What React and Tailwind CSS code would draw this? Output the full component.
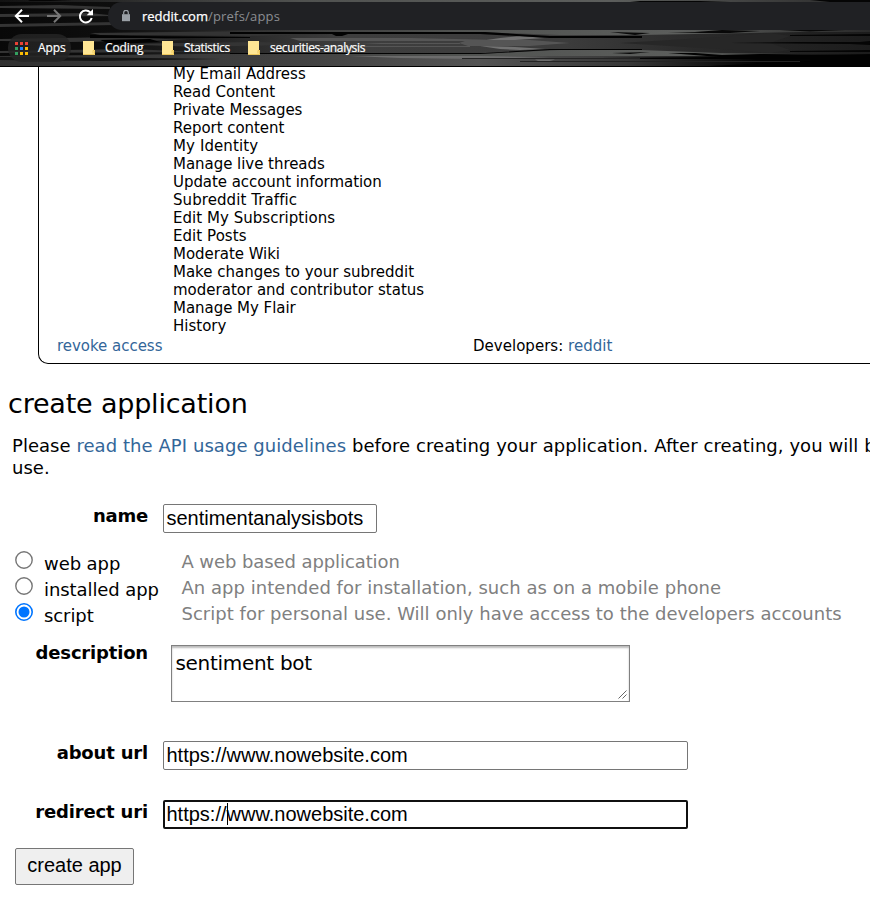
const permissions = [
  ['My Email Address', 'tracking-[0px]'],
  ['Read Content', 'tracking-[0px]'],
  ['Private Messages', 'tracking-[-0.08px]'],
  ['Report content', 'tracking-[-0.04px]'],
  ['My Identity', 'tracking-[0.1px]'],
  ['Manage live threads', 'tracking-[-0.04px]'],
  ['Update account information', 'tracking-[-0.06px]'],
  ['Subreddit Traffic', 'tracking-[0.08px]'],
  ['Edit My Subscriptions', 'tracking-[0.03px]'],
  ['Edit Posts', 'tracking-[0.05px]'],
  ['Moderate Wiki', 'tracking-[-0.05px]'],
  ['Make changes to your subreddit', 'tracking-[-0.01px]'],
  ['moderator and contributor status', 'tracking-[0px]'],
  ['Manage My Flair', 'tracking-[-0.04px]'],
  ['History', 'tracking-[0px]'],
];

const appTypes = [
  { name: 'web app', hint: 'A web based application', tracking: 'tracking-[-0.09px]' },
  { name: 'installed app', hint: 'An app intended for installation, such as on a mobile phone', tracking: 'tracking-[0.03px]' },
  { name: 'script', hint: 'Script for personal use. Will only have access to the developers accounts', tracking: 'tracking-[0.02px]', checked: true },
];

function Streaks() {
  return (
    <svg className="absolute inset-0" width="870" height="67" viewBox="0 0 870 67">
      <defs>
        <linearGradient id="base" x1="0" x2="1" y1="0" y2="0">
          <stop offset="0" stopColor="#080808" />
          <stop offset="0.13" stopColor="#0e0e0e" />
          <stop offset="0.24" stopColor="#222" />
          <stop offset="0.4" stopColor="#3e3e3e" />
          <stop offset="0.65" stopColor="#3c3c3c" />
          <stop offset="0.8" stopColor="#2a2a2a" />
          <stop offset="1" stopColor="#1c1c1c" />
        </linearGradient>
        <linearGradient id="shine" x1="0" x2="1" y1="0" y2="0">
          <stop offset="0" stopColor="#3a3a3a" stopOpacity="0.2" />
          <stop offset="0.35" stopColor="#505250" />
          <stop offset="0.7" stopColor="#5c5e5c" />
          <stop offset="1" stopColor="#2a2a2a" />
        </linearGradient>
        <linearGradient id="lower" x1="0" x2="1" y1="0" y2="0">
          <stop offset="0" stopColor="#303030" />
          <stop offset="0.35" stopColor="#424242" />
          <stop offset="0.55" stopColor="#545454" />
          <stop offset="0.72" stopColor="#383838" />
          <stop offset="0.87" stopColor="#030303" />
        </linearGradient>
      </defs>
      <rect width="870" height="67" fill="url(#base)" />
      <rect width="870" height="2" fill="url(#shine)" />
      <path d="M30 0h42l-22 1H28zM630 1h70l30 1H640zM810 0h60v2H830z" fill="#050505" />
      <g fill="#343434">
        <path d="M0 6 60 5 110 7 110 9 0 8zM0 14 90 13 118 16 0 17zM0 24 118 22 116 25 0 27z" />
        <path d="M90 33 260 31 330 34 250 36 100 35zM0 39 120 37 190 40 70 42 0 41zM110 44 260 42 320 44 200 47zM0 51 130 49 200 52 0 53z" />
      </g>
      <path d="M100 40 150 39 160 42 110 44zM90 35 130 36 250 37V38H90z" fill="#020202" />
      <path d="M0 56 200 54H870V66H0z" fill="url(#lower)" />
      <path d="M0 57 150 58 220 59 100 61 0 60z" fill="#151515" />
      <path d="M230 30H870V32H800L640 35 560 35 480 32H230z" fill="url(#shine)" />
      <path d="M230 54H480L560 50H640L720 53 870 55V56H230z" fill="url(#shine)" />
      <path d="M290 38H410L500 40V41H300zM320 46H470V47H320zM360 43H460V44H380z" fill="#565656" />
      <path d="M480 41 500 38 520 36 545 38 515 40zM480 46 515 47 545 49 520 50 500 49z" fill="#727272" />
      <path d="M459 43 468 40 530 40 570 43 530 46 468 46z" fill="#555" />
      <path d="M230 32H485L550 36H642V38H550L480 34H230zM230 53H485L550 49H642V50H550L480 54H230zM332 34h16l-6 2h-6z" fill="#020202" />
      <path d="M610 32 650 33 635 35zM668 32 695 32 722 30 760 31 730 33 700 33zM780 30 845 30 810 31.5zM612 53 650 52 630 54z" fill="#080808" />
      <path d="M668 53 695 53 722 55 760 54 870 55V66H710L810 61V59H600V58L720 57z" fill="#020202" />
      <path d="M620 43 720 37 770 33 790 36 770 43 790 50 770 53 720 49z" fill="#272727" />
      <path d="M730 43 800 42 860 42 870 41V45L850 44 730 43zM790 35 870 34V36L790 36zM790 51 870 50V52L790 52z" fill="#050505" />
      <path d="M350 56 480 56 550 57 480 59 400 58zM535 59.500h20l-5 1.500h-12z" fill="#6c6c6c" />
      <path d="M462 58H640V59H462zM520 61H800V62H520z" fill="#242424" />
      <path d="M0 66H870V67H0z" fill="#000" />
    </svg>
  );
}

function Folder() {
  return (
    <svg width="12" height="14" viewBox="0 0 12 14" className="shrink-0">
      <path d="M0 0h11v9h1v5H0z" fill="#ffe694" />
      <path d="M0 13.500h11.500V9.500h-1.500v3" fill="none" stroke="#eec75a" />
    </svg>
  );
}

function BrowserChrome() {
  return (
    <header className="relative h-[67px] w-full overflow-hidden bg-black">
      <Streaks />
      <div className="relative flex h-8 items-center">
        <svg width="108" height="32" viewBox="0 0 108 32" fill="none" strokeWidth="2" className="shrink-0">
          <path d="M29 16H16.500M22 9.700 15.800 16l6.200 6.300" stroke="#fff" />
          <path d="M47 16h12.500M54 9.700 60.200 16 54 22.300" stroke="#777" />
          <path d="M90.200 12.200A6 6 0 1 0 91.700 18" stroke="#fff" />
          <path d="M93 9v6.300h-6.300z" fill="#fff" />
        </svg>
        <div className="flex h-7 flex-1 items-center rounded-l-full bg-[#202124] pl-[13px]">
          <svg width="10" height="12" viewBox="0 0 10 12" className="shrink-0">
            <path d="M1 4.200h8v7H1z" fill="#9aa0a6" />
            <path d="M2.700 4.500V2.600a2.300 2.300 0 0 1 4.600 0v1.900" fill="none" stroke="#9aa0a6" strokeWidth="1.2" />
          </svg>
          <span className="ml-[11px] whitespace-nowrap font-['Open_Sans','Noto_Sans',sans-serif] text-[13px] leading-none text-white">
            <span className="[-webkit-text-stroke:0.25px_white]">reddit.com</span>
            <span className="tracking-[0.2px] text-[#8b8e92]">/prefs/apps</span>
          </span>
        </div>
      </div>
      <nav className="relative flex h-8 items-center whitespace-nowrap pl-2 font-['Open_Sans','Noto_Sans',sans-serif] text-[12px] leading-none text-white [-webkit-text-stroke:0.2px_white]">
        <div className="flex h-7 w-[63px] items-center rounded-full bg-[#252525]/80 pl-[7px]">
          <svg width="13" height="13" viewBox="0 0 13 13" stroke="none">
            <path d="M0 0h3v3H0zM5 0h3v3H5zM10 0h3v3h-3z" fill="#ea4335" />
            <path d="M0 5h3v3H0z" fill="#34a060" />
            <path d="M5 5h3v3H5z" fill="#2684fc" />
            <path d="M10 5h3v3h-3z" fill="#fbbc04" />
            <path d="M0 10h3v3H0z" fill="#34a060" />
            <path d="M5 10h3v3H5zM10 10h3v3h-3z" fill="#fbbc04" />
          </svg>
          <span className="ml-[10px] tracking-[-0.1px]">Apps</span>
        </div>
        <div className="ml-3 flex w-[79px] items-center gap-[10px]"><Folder /><span className="tracking-[-0.1px]">Coding</span></div>
        <div className="flex w-[86px] items-center gap-[10px]"><Folder /><span className="tracking-[-0.35px]">Statistics</span></div>
        <div className="flex items-center gap-[10px]"><Folder /><span className="tracking-[-0.33px]">securities-analysis</span></div>
      </nav>
    </header>
  );
}

function TextField({ value, className }) {
  return (
    <div className={`flex h-[29px] items-center whitespace-nowrap rounded-[2px] bg-white pb-[2px] font-['Liberation_Sans',Arial,sans-serif] text-[20px] leading-none ${className}`}>
      {value}
    </div>
  );
}

function Label({ children, className }) {
  return (
    <div className={`w-[148px] shrink-0 text-right font-bold leading-[22px] ${className}`}>
      <span>{children}</span>
    </div>
  );
}

export default function App() {
  return (
    <div className="h-[911px] w-[870px] overflow-hidden bg-white font-['DejaVu_Sans',Verdana,sans-serif] text-[18px] text-black">
      <BrowserChrome />
      <section className="ml-[38px] h-[297px] w-[850px] overflow-hidden rounded-bl-[10px] border-b border-l border-black text-[15px] leading-[18px]">
        <ul className="-mt-[2px] ml-[134px] whitespace-nowrap">
          {permissions.map(([text, tracking]) => (
            <li key={text}><span className={tracking}>{text}</span></li>
          ))}
        </ul>
        <div className="ml-[18px] mt-[2px] flex whitespace-nowrap">
          <a className="w-[416px] tracking-[-0.03px] text-[#336699]">revoke access</a>
          <span className="tracking-[0.02px]">Developers: <a className="text-[#336699]">reddit</a></span>
        </div>
      </section>

      <h1 className="ml-2 mt-[23px] h-[34px] whitespace-nowrap text-[27px] leading-[34px] tracking-[-0.2px]">create application</h1>
      <p className="ml-3 mt-[14px] h-11 whitespace-nowrap leading-[22px] tracking-[0.04px]">
        <span>Please </span><a className="tracking-[0.06px] text-[#336699]">read the API usage guidelines</a><span className="tracking-[0.06px]"> before creating your application. After creating, you will be</span>
        <br />use.
      </p>

      <div className="mt-[25px] flex h-[29px]">
        <Label className="mt-px tracking-[-0.2px]">name</Label>
        <TextField value="sentimentanalysisbots" className="ml-[15px] w-[214px] border border-[#767676] pl-[2.5px]" />
      </div>

      <div className="mt-[17px] flex flex-col">
        {appTypes.map((t) => (
          <div key={t.name} className="flex h-[26px] whitespace-nowrap pl-[15px] leading-[22px]">
            <svg width="18" height="18" viewBox="0 0 18 18" className="mt-px shrink-0">
              <circle cx="9" cy="9" r="8.2" fill="#fff" stroke={t.checked ? '#0075ff' : '#767676'} strokeWidth={t.checked ? 1.6 : 1.4} />
              {t.checked && <circle cx="9" cy="9" r="5.5" fill="#0075ff" />}
            </svg>
            <span className="ml-[11px] mt-[3px] w-[137.5px] tracking-[-0.08px]">{t.name}</span>
            <span className={`mt-px text-[#808080] ${t.tracking}`}>{t.hint}</span>
          </div>
        ))}
      </div>

      <div className="mt-[17px] flex h-[57px]">
        <Label className="-mt-[3px] tracking-[-0.18px]">description</Label>
        <div className="ml-[23px] flex w-[459px] items-end justify-between border border-[#808080] pb-[2px] pl-[3.5px] pr-[2px] text-[20px] leading-6 shadow-[inset_0_2px_2px_#bbb]">
          <span className="mt-[5px] self-start tracking-[-0.3px]">sentiment bot</span>
          <svg width="9" height="9" viewBox="0 0 9 9" stroke="#555" strokeWidth="0.9">
            <path d="M0.500 8.500l8-8M4.500 8.500l4-4" />
          </svg>
        </div>
      </div>

      <div className="mt-[39px] flex h-[29px]">
        <Label className="mt-px tracking-[-0.18px]">about url</Label>
        <TextField value="https://www.nowebsite.com" className="ml-[15px] w-[525px] border border-[#767676] pl-[2.5px]" />
      </div>
      <div className="mt-[30px] flex h-[29px]">
        <Label className="mt-px tracking-[-0.15px]">redirect uri</Label>
        <TextField
          value={<><span>https://</span><span className="-mr-px h-[22px] w-px bg-black" /><span>www.nowebsite.com</span></>}
          className="ml-[15px] w-[525px] border-2 border-[#101010] pl-[1.5px]"
        />
      </div>
      <button className="ml-[15px] mt-[19px] flex h-[37px] w-[119px] items-center justify-center rounded-[2px] border border-[#767676] bg-[#efefef] pb-[3px] font-['Liberation_Sans',Arial,sans-serif] text-[20px] leading-none">
        create app
      </button>
    </div>
  );
}
